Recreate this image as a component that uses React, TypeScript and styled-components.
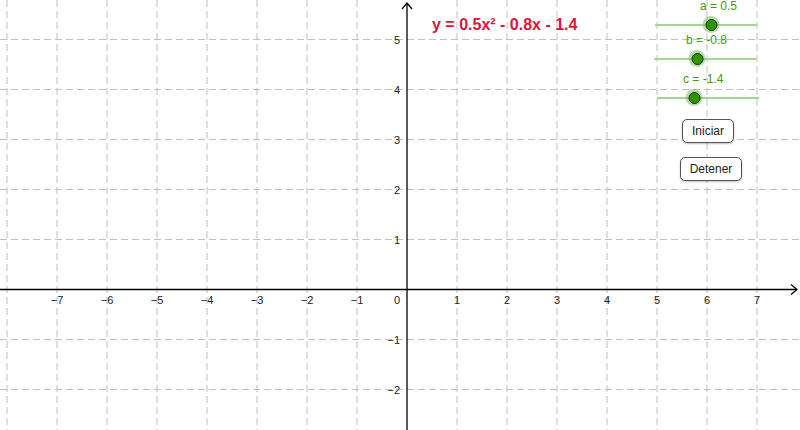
import React from "react";
import styled, { createGlobalStyle } from "styled-components";

const GlobalStyle = createGlobalStyle`
  html, body { margin: 0; padding: 0; background: #ffffff; overflow: hidden; }
  #root { width: 800px; height: 430px; }
`;

const ORIGIN_X = 407;
const ORIGIN_Y = 289.5;
const UNIT = 50;

const Canvas = styled.div`
  position: relative;
  width: 800px;
  height: 430px;
  background: #ffffff;
  overflow: hidden;
  font-family: "Liberation Sans", Arial, sans-serif;
`;

const GraphSvg = styled.svg`
  display: block;
  width: 800px;
  height: 430px;
`;

const TickLabel = styled.text`
  font-family: "Liberation Sans", Arial, sans-serif;
  font-size: 11px;
  fill: #222222;
`;

/* Objects placed on the GeoGebra canvas: their position is the content */
const Formula = styled.div`
  position: absolute;
  left: 432px;
  top: 16.7px;
  font-size: 16px;
  line-height: 16px;
  font-weight: bold;
  color: #dc143c;
  white-space: nowrap;
`;

const SliderBox = styled.div<{ $x: number; $top: number; $w: number }>`
  position: absolute;
  left: ${(p) => p.$x}px;
  top: ${(p) => p.$top}px;
  width: ${(p) => p.$w}px;
  display: flex;
  flex-direction: column;
  gap: 4px;
`;

const SliderLabel = styled.div<{ $indent: number }>`
  padding-left: ${(p) => p.$indent}px;
  font-size: 12px;
  line-height: 12px;
  height: 12px;
  color: #3f9b12;
  white-space: nowrap;
`;

const TrackRow = styled.div`
  position: relative;
  height: 17px;
  display: flex;
  align-items: center;
`;

const Track = styled.div`
  flex: 1;
  height: 2px;
  background: #a6d497;
`;

const Knob = styled.div`
  position: absolute;
  top: 0;
  width: 17px;
  height: 17px;
  border-radius: 50%;
  background: rgba(120, 190, 100, 0.55);
  display: flex;
  align-items: center;
  justify-content: center;
  transform: translateX(-8.5px);

  &::after {
    content: "";
    width: 12px;
    height: 12px;
    box-sizing: border-box;
    border-radius: 50%;
    background: #2f9400;
    border: 1.5px solid #173300;
  }
`;

const ButtonColumn = styled.div`
  position: absolute;
  left: 680px;
  top: 119px;
  display: flex;
  flex-direction: column;
  align-items: flex-start;
  gap: 14px;
`;

const GgbButton = styled.button<{ $w: number; $indent?: number }>`
  width: ${(p) => p.$w}px;
  height: 24px;
  margin-left: ${(p) => p.$indent ?? 0}px;
  box-sizing: border-box;
  padding: 0;
  border: 1.5px solid #555555;
  border-radius: 5px;
  background: #ffffff;
  box-shadow: 0 1px 2px rgba(0, 0, 0, 0.25);
  font-family: "Liberation Sans", Arial, sans-serif;
  font-size: 12px;
  color: #222222;
  cursor: pointer;
`;

type SliderProps = {
  label: string;
  labelX: number;
  top: number;
  x1: number;
  x2: number;
  knobX: number;
};

function Slider({ label, labelX, top, x1, x2, knobX }: SliderProps) {
  return (
    <SliderBox $x={x1} $top={top} $w={x2 - x1}>
      <SliderLabel $indent={labelX - x1}>{label}</SliderLabel>
      <TrackRow>
        <Track />
        <Knob style={{ left: knobX - x1 }} />
      </TrackRow>
    </SliderBox>
  );
}

function Graph() {
  const vLines: number[] = [];
  for (let k = -8; k <= 8; k++) {
    const x = ORIGIN_X + k * UNIT;
    if (x >= 0 && x <= 800 && k !== 0) vLines.push(x);
  }
  const hLines: number[] = [];
  for (let k = -3; k <= 6; k++) {
    const y = ORIGIN_Y - k * UNIT;
    if (y >= 0 && y <= 430 && k !== 0) hLines.push(y);
  }
  const xLabels: number[] = [];
  for (let k = -7; k <= 7; k++) if (k !== 0) xLabels.push(k);
  const yLabels = [5, 4, 3, 2, 1, -1, -2];
  const fmt = (n: number) => (n < 0 ? `\u2212${-n}` : `${n}`);

  return (
    <GraphSvg viewBox="0 0 800 430">
      <g stroke="#c0c0c0" strokeWidth={1} strokeDasharray="7 4" fill="none">
        {vLines.map((x) => (
          <line key={`v${x}`} x1={x} y1={0} x2={x} y2={430} />
        ))}
        {hLines.map((y) => (
          <line key={`h${y}`} x1={0} y1={y} x2={800} y2={y} />
        ))}
      </g>
      <g stroke="#000000" strokeWidth={1.3} fill="none">
        <line x1={0} y1={ORIGIN_Y} x2={797} y2={ORIGIN_Y} />
        <polyline points={`791,${ORIGIN_Y - 5} 797,${ORIGIN_Y} 791,${ORIGIN_Y + 5}`} />
        <line x1={ORIGIN_X} y1={430} x2={ORIGIN_X} y2={3} />
        <polyline points={`${ORIGIN_X - 5},9 ${ORIGIN_X},3 ${ORIGIN_X + 5},9`} />
      </g>
      {xLabels.map((k) => (
        <TickLabel key={`xl${k}`} x={ORIGIN_X + k * UNIT} y={304} textAnchor="middle">
          {fmt(k)}
        </TickLabel>
      ))}
      <TickLabel x={397} y={304} textAnchor="middle">
        0
      </TickLabel>
      {yLabels.map((k) => (
        <TickLabel key={`yl${k}`} x={400} y={ORIGIN_Y - k * UNIT + 4} textAnchor="end">
          {fmt(k)}
        </TickLabel>
      ))}
    </GraphSvg>
  );
}

export default function App() {
  return (
    <>
      <GlobalStyle />
      <Canvas>
        <Graph />
        <Formula>y = 0.5x² - 0.8x - 1.4</Formula>
        <Slider label="a = 0.5" labelX={700} top={0} x1={655} x2={757} knobX={711} />
        <Slider label="b = -0.8" labelX={686} top={34} x1={654} x2={756} knobX={697} />
        <Slider label="c = -1.4" labelX={683} top={73} x1={657} x2={759} knobX={694} />
        <ButtonColumn>
          <GgbButton $w={52} $indent={2}>
            Iniciar
          </GgbButton>
          <GgbButton $w={62}>Detener</GgbButton>
        </ButtonColumn>
      </Canvas>
    </>
  );
}
